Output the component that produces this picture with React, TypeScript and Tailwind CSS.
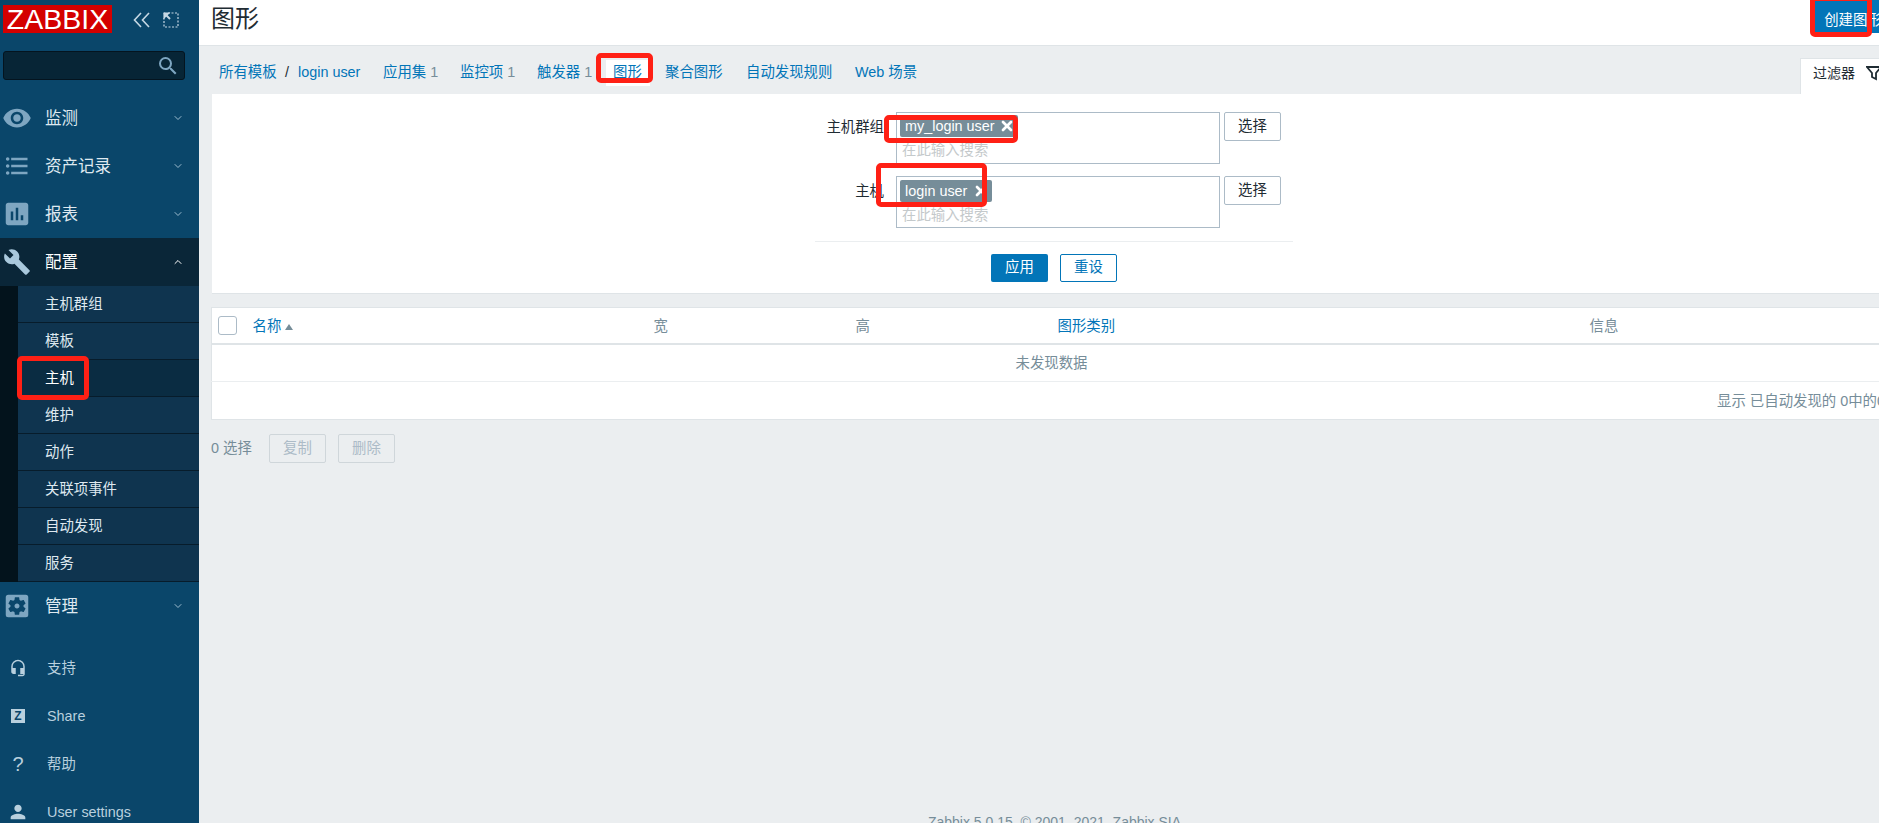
import React from "react";
import { ChevronDown, ChevronUp, X } from "lucide-react";
import {
  MdVisibility,
  MdFormatListBulleted,
  MdAssessment,
  MdBuild,
  MdSettingsApplications,
  MdHeadsetMic,
  MdPerson,
  MdSearch,
} from "react-icons/md";

const topMenu = [
  { label: "监测", icon: <MdVisibility size={30} /> },
  { label: "资产记录", icon: <MdFormatListBulleted size={28} /> },
  { label: "报表", icon: <MdAssessment size={30} /> },
];

const subMenu = ["主机群组", "模板", "主机", "维护", "动作", "关联项事件", "自动发现", "服务"];

const tabs = [
  { label: "应用集", count: "1", w: "w-[77px]" },
  { label: "监控项", count: "1", w: "w-[77px]" },
  { label: "触发器", count: "1", w: "w-[76px]" },
];

function NavRow({ label, icon, open, active }: { label: string; icon: React.ReactNode; open?: boolean; active?: boolean }) {
  return (
    <div className={`flex h-12 items-center ${active ? "bg-[#0a2638] text-white" : "text-[#dfe9f0]"}`}>
      <div className={`flex w-[34px] justify-center ${active ? "text-[#a9c8dc]" : "text-[#7ea6c1]"}`}>{icon}</div>
      <span className="ml-[11px] flex-1 text-[16.5px]">{label}</span>
      {open ? (
        <ChevronUp size={12} className="mr-[15px] text-white" />
      ) : (
        <ChevronDown size={12} className="mr-[15px] text-[#9dbccf]" />
      )}
    </div>
  );
}

function BottomRow({ label, icon }: { label: string; icon: React.ReactNode }) {
  return (
    <div className="flex h-12 shrink-0 items-center text-[#b9d0de]">
      <div className="flex w-[36px] justify-center text-[#b9d0de]">{icon}</div>
      <span className="ml-[11px] pt-[2px] text-[14.4px]">{label}</span>
    </div>
  );
}

function Sidebar() {
  return (
    <aside className="flex h-[823px] w-[199px] shrink-0 flex-col overflow-hidden bg-[#0a466a]">
      <div className="flex h-[51px] shrink-0 items-start pl-[3px] pt-[5px]">
        <div className="flex h-[28px] w-[109px] items-center justify-center bg-[#d40000] text-[28.5px] leading-none text-white">
          ZABBIX
        </div>
        <svg width="18" height="16" viewBox="0 0 18 16" className="ml-[21px] mt-[7px]" fill="none" stroke="#c6d8e4" strokeWidth="1.6">
          <path d="M8 1 1.5 8 8 15M16 1 9.5 8 16 15" />
        </svg>
        <svg width="16" height="16" viewBox="0 0 16 16" className="ml-[12px] mt-[7px]" fill="none" stroke="#c6d8e4" strokeWidth="1.2">
          <path d="M5 1h10v14H1V6" strokeDasharray="2 1.5" />
          <path d="M1 1l6 6" strokeWidth="2" />
          <path d="M1 1h5L1 6z" fill="#c6d8e4" />
        </svg>
      </div>
      <div className="ml-[3px] flex h-[29px] w-[182px] shrink-0 items-center justify-end rounded-[3px] border border-[#04141f] bg-[#072536] pr-[4px] text-[#7ea6c1]">
        <MdSearch size={24} />
      </div>
      <div className="mt-[14px] shrink-0">
        {topMenu.map((m) => (
          <NavRow key={m.label} label={m.label} icon={m.icon} />
        ))}
        <NavRow label="配置" icon={<MdBuild size={28} />} open active />
        <div className="border-l-[18px] border-[#03131c]">
          {subMenu.map((s) => (
            <div
              key={s}
              className={`flex h-[37px] items-center border-b border-[#071c2b] pl-[27px] pt-[1px] text-[14.4px] ${
                s === "主机" ? "bg-[#0a2c42] text-white" : "bg-[#0f344f] text-[#dfe9f0]"
              }`}
            >
              {s}
            </div>
          ))}
        </div>
        <NavRow label="管理" icon={<MdSettingsApplications size={30} />} />
      </div>
      <div className="mt-[14px] shrink-0">
        <BottomRow label="支持" icon={<MdHeadsetMic size={18} />} />
        <BottomRow
          label="Share"
          icon={
            <span className="flex h-[14px] w-[14px] items-center justify-center bg-[#b9d0de] text-xs font-bold leading-none text-[#0a466a]">
              Z
            </span>
          }
        />
        <BottomRow label="帮助" icon={<span className="text-xl leading-none">?</span>} />
        <BottomRow label="User settings" icon={<MdPerson size={22} />} />
      </div>
    </aside>
  );
}

function Chip({ label, w }: { label: string; w: string }) {
  return (
    <div className={`flex h-[22px] ${w} items-center justify-between rounded-[2px] bg-[#768d99] pl-[5px] pr-[3px] text-[14.4px] text-white`}>
      <span className="pt-[1px]">{label}</span>
      <X size={16} strokeWidth={4} />
    </div>
  );
}

function FilterRow({ label, chip, w, pad }: { label: string; chip: string; w: string; pad: string }) {
  return (
    <div className="flex items-start text-[14.4px] text-[#1f2c33]">
      <div className="w-[71px] whitespace-nowrap pr-[2px] pt-[5px] text-right">{label}</div>
      <div className={`ml-[10px] h-[52px] w-[324px] border border-[#acbbc7] pl-[3px] ${pad}`}>
        <Chip label={chip} w={w} />
        <div className="mt-[3px] pl-[2px] text-[#c4c9cb]">在此输入搜索</div>
      </div>
      <button className="ml-[4px] h-[29px] w-[57px] rounded-[2px] border border-[#acbbc7] bg-white text-[#1f2c33]">选择</button>
    </div>
  );
}

function FilterPanel() {
  return (
    <div className="ml-px border-b border-[#dfe4e7] bg-white pb-[11px] pl-[603px] pt-[18px]">
      <div className="flex flex-col gap-[12px]">
        <FilterRow label="主机群组" chip="my_login user" w="w-[118px]" pad="pt-[2px]" />
        <FilterRow label="主机" chip="login user" w="w-[92px]" pad="pt-[3px]" />
      </div>
      <div className="mt-[13px] w-[478px] border-t border-[#ebeef0]" />
      <div className="mt-[12px] flex w-[478px] justify-center gap-3 text-[14.4px]">
        <button className="h-[28px] w-[57px] rounded-[2px] bg-[#0275b8] text-white">应用</button>
        <button className="h-[28px] w-[57px] rounded-[2px] border border-[#0275b8] bg-white text-[#0275b8]">重设</button>
      </div>
    </div>
  );
}

function DataTable() {
  return (
    <table className="mt-[13px] w-full table-fixed border border-[#dfe4e7] bg-white text-[14.4px]">
      <thead>
        <tr className="h-[36px] border-b-2 border-[#dfe4e7] text-left font-normal text-[#768d99]">
          <th className="w-[41px] pl-[6px] font-normal">
            <div className="h-[19px] w-[19px] rounded-[3px] border border-[#acbbc7]" />
          </th>
          <th className="w-[401px] pt-[3px] font-normal text-[#0275b8]">
            <span className="flex items-center gap-[4px]">
              名称
              <svg width="8" height="6" viewBox="0 0 8 6" fill="#768d99">
                <path d="M4 0 8 6H0z" />
              </svg>
            </span>
          </th>
          <th className="w-[202px] pt-[3px] font-normal">宽</th>
          <th className="w-[202px] pt-[3px] font-normal">高</th>
          <th className="w-[532px] pt-[3px] font-normal text-[#0275b8]">图形类别</th>
          <th className="pt-[3px] font-normal">信息</th>
        </tr>
      </thead>
      <tbody>
        <tr className="h-[38px] border-b border-[#ebeef0]">
          <td colSpan={6} className="pt-[2px] text-center text-[#768d99]">
            未发现数据
          </td>
        </tr>
        <tr className="h-[38px]">
          <td colSpan={6} className="pr-[6px] pt-[2px] text-right text-[#768d99]">
            显示 已自动发现的 0中的0
          </td>
        </tr>
      </tbody>
    </table>
  );
}

// the red boxes somebody drew over the screenshot
const redBox = "absolute rounded-[5px] border-[5px] border-[#ff2015]";

export default function App() {
  return (
    <div className="relative flex h-[823px] w-[1879px] overflow-hidden bg-[#ebeef0] font-['Liberation_Sans','Noto_Sans_CJK_SC',sans-serif]">
      <Sidebar />
      <main className="min-w-0 flex-1 overflow-hidden">
        <div className="w-[1693px]">
          <header className="flex h-[46px] items-start justify-between border-b border-[#dfe4e7] bg-white pl-3">
            <h1 className="pt-[3px] text-2xl text-[#1f2c33]">图形</h1>
            <button className="h-[33px] w-[78px] bg-[#0275b8] pt-[8px] text-[14.4px] text-white">创建图形</button>
          </header>
          <div className="pl-3">
            <div className="flex h-[48px] items-end justify-between">
              <nav className="flex h-[48px] items-center pl-[8px] pt-[5px] text-[14.4px] text-[#0275b8]">
                <span className="w-[66px]">所有模板</span>
                <span className="w-[13px] text-[#1f2c33]">/</span>
                <span className="w-[85px]">login user</span>
                {tabs.map((t) => (
                  <span key={t.label} className={t.w}>
                    {t.label} <span className="text-[#768d99]">{t.count}</span>
                  </span>
                ))}
                <span className="-ml-[7px] mr-[15px] flex h-[26px] w-[44px] items-center bg-white pl-[7px]">图形</span>
                <span className="w-[81px]">聚合图形</span>
                <span className="w-[109px]">自动发现规则</span>
                <span>Web 场景</span>
              </nav>
              <div className="flex h-9 w-[92px] items-center gap-[11px] border-l border-t border-[#dfe4e7] bg-white pb-2 pl-3 text-sm text-[#1f2c33]">
                <span>过滤器</span>
                <svg width="16" height="16" viewBox="0 0 16 16" fill="none" stroke="#1f2c33" strokeWidth="1.8" className="shrink-0">
                  <path d="M1 2h14L10 8v6l-4-2V8z" />
                </svg>
              </div>
            </div>
            <FilterPanel />
            <DataTable />
            <div className="mt-[14px] flex h-[29px] items-center text-[14.4px] text-[#768d99]">
              <span className="w-[58px]">0 选择</span>
              <button className="h-[29px] w-[57px] rounded-[2px] border border-[#cfd6da] text-[#acbbc7]">复制</button>
              <button className="ml-3 h-[29px] w-[57px] rounded-[2px] border border-[#cfd6da] text-[#acbbc7]">删除</button>
            </div>
            <footer className="mt-[349px] pl-[6px] text-center text-sm text-[#768d99]">Zabbix 5.0.15. © 2001–2021, Zabbix SIA</footer>
          </div>
        </div>
      </main>
      <div className={`${redBox} left-[17px] top-[356px] h-[44px] w-[72px]`} />
      <div className={`${redBox} left-[596px] top-[53px] h-[30px] w-[57px]`} />
      <div className={`${redBox} left-[884px] top-[115px] h-[28px] w-[134px]`} />
      <div className={`${redBox} left-[876px] top-[163px] h-[44px] w-[111px]`} />
      <div className={`${redBox} left-[1810px] top-[-4px] h-[41px] w-[62px]`} />
    </div>
  );
}
